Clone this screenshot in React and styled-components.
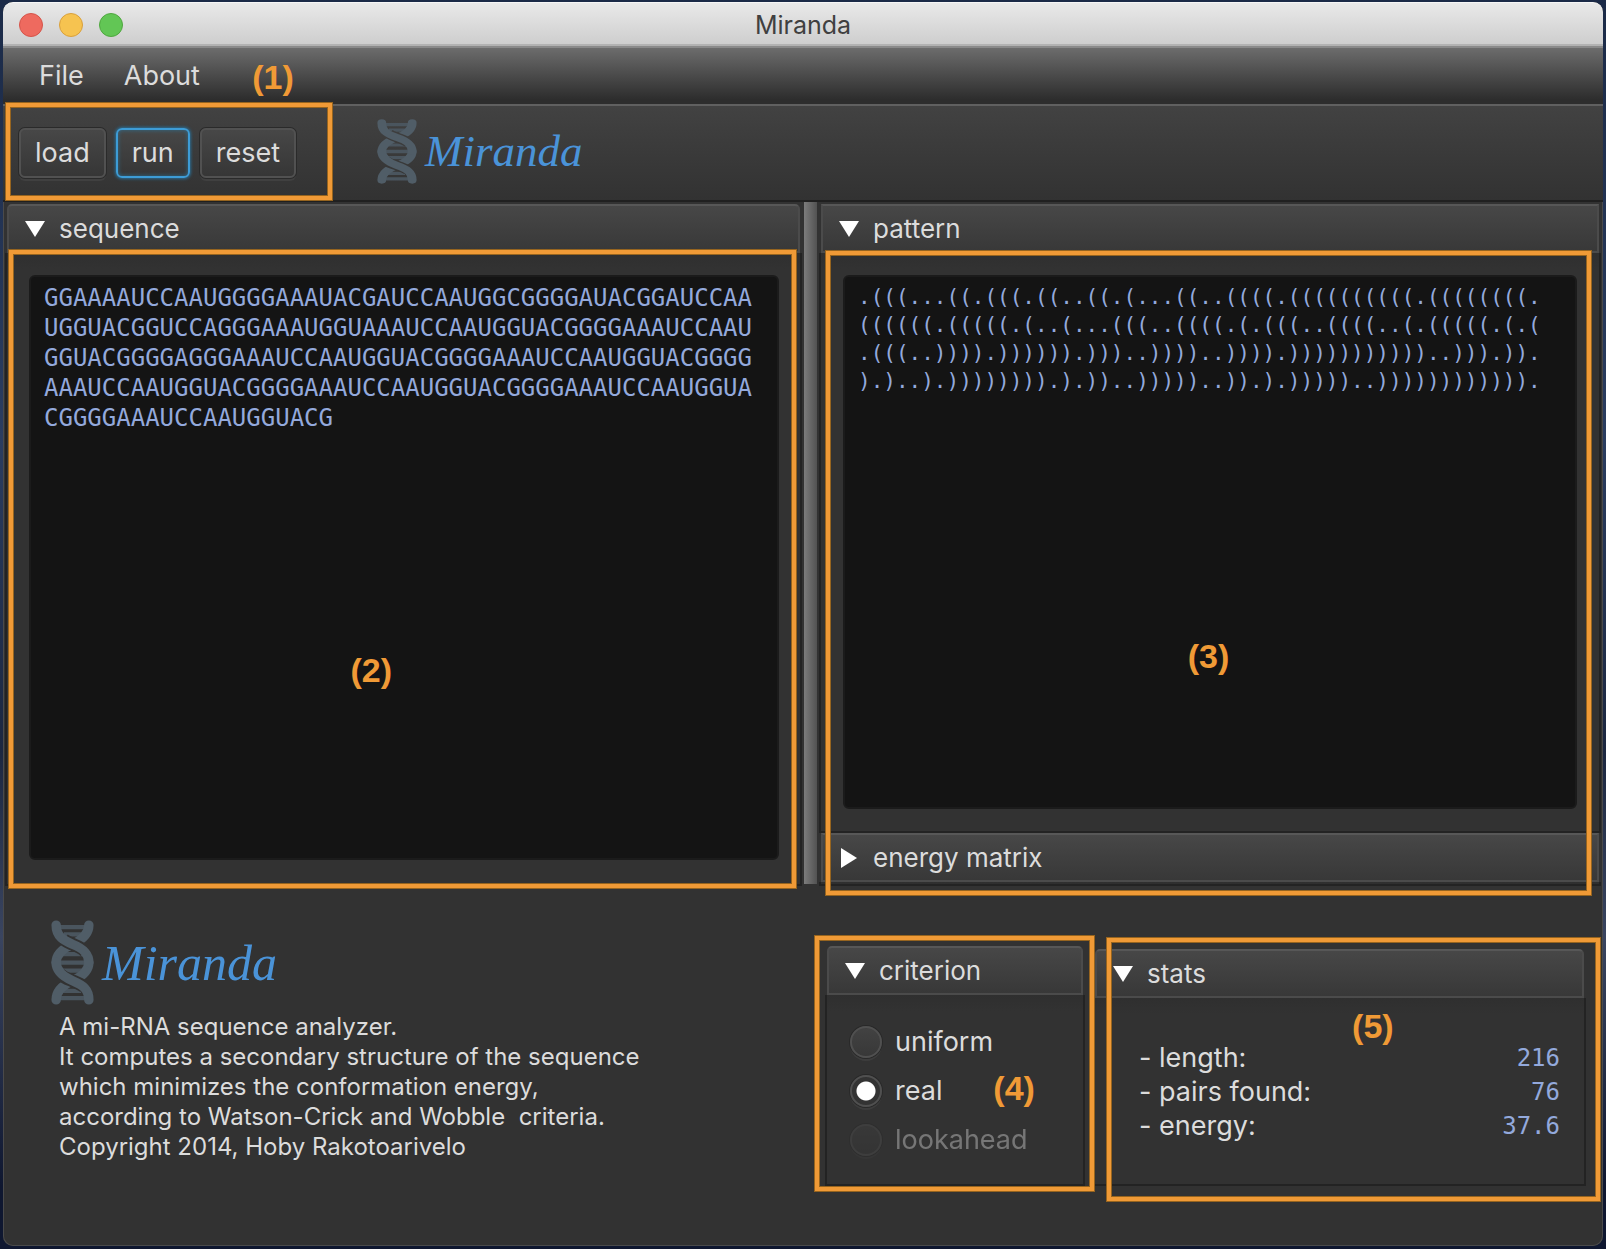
import React, { useId, useState } from "react";
import styled, { createGlobalStyle, css } from "styled-components";

const SANS = `Inter, Roboto, "Liberation Sans", sans-serif`;
const MONO = `"DejaVu Sans Mono", "Liberation Mono", monospace`;

const GlobalStyle = createGlobalStyle`
  *, *::before, *::after { box-sizing: border-box; }
  body {
    margin: 0;
    background: linear-gradient(#1b2a47, #2b3d60 35%, #1c2740 60%, #3a4560 75%, #0f1730 95%);
    font-family: ${SANS};
    color: #dcdcdc;
  }
`;

const Desktop = styled.div`
  display: flex;
  min-height: 100vh;
  padding: 2px 3px 3px;
`;

const Window = styled.div`
  flex: 1;
  min-width: 0;
  display: flex;
  flex-direction: column;
  background: #323232;
  border-radius: 10px;
  box-shadow: inset 0 0 0 1px #4a4a4a;
`;

const TitleBar = styled.header`
  display: grid;
  grid-template-columns: 1fr auto 1fr;
  align-items: center;
  height: 44px;
  padding: 2px 16px 0;
  background: linear-gradient(#e9e9e9, #cecece);
  border-top: 1px solid #f6f6f6;
  border-bottom: 2px solid #b2b2b2;
  border-radius: 10px 10px 0 0;
`;

const Title = styled.h1`
  margin: 0;
  font-size: 25px;
  font-weight: 400;
  line-height: 30px;
  color: #404040;
`;

const Lights = styled.div`
  display: flex;
  gap: 16px;
`;

const Light = styled.button`
  width: 24px;
  height: 24px;
  padding: 0;
  border: 1px solid ${(p) => p.$edge};
  border-radius: 50%;
  background: ${(p) => p.$fill};
`;

const MenuBar = styled.nav`
  display: flex;
  align-items: center;
  gap: 40px;
  height: 58px;
  padding: 0 36px;
  background: linear-gradient(#6c6c6c, #2d2d2d 92%);
  border-top: 2px solid #8a8a8a;
`;

const MenuItem = styled.button`
  padding: 0;
  border: 0;
  background: none;
  color: #dcdcdc;
  font: 400 27px/30px ${SANS};
`;

const ToolBar = styled.div`
  display: flex;
  align-items: center;
  gap: 44px;
  height: 98px;
  background: linear-gradient(#424242, #323232);
  border-top: 2px solid #606060;
  border-bottom: 2px solid #202020;
`;

const Actions = styled.div`
  position: relative;
  display: flex;
  align-items: center;
  align-self: stretch;
  gap: 10px;
  width: 330px;
  padding-left: 16px;
`;

const ActionButton = styled.button`
  height: 50px;
  padding: 0 14px;
  border: 2px solid #515151;
  border-radius: 6px;
  background: linear-gradient(#474747, #363636);
  box-shadow: 0 0 0 1px #2a2a2a, 0 3px 0 #404040;
  color: #dcdcdc;
  font: 400 27px/30px ${SANS};
  ${(p) =>
    p.$focused &&
    css`
      border-color: #3d9cd6;
      box-shadow: 0 0 3px 1px #2a6d93, inset 0 0 4px #2f6f90;
    `}
`;

const Brand = styled.div`
  display: flex;
  align-items: center;
  gap: 8px;
  padding-bottom: 4px;
`;

const BrandName = styled.span`
  font-family: "Liberation Serif", serif;
  font-style: italic;
  font-size: ${(p) => p.$size}px;
  line-height: 56px;
  color: #4a93d8;
`;

const Split = styled.main`
  flex: 1;
  display: grid;
  grid-template-columns: 801fr 13px 786fr;
`;

const SplitSide = styled.section`
  position: relative;
  display: flex;
  flex-direction: column;
  min-width: 0;
  padding: 2px 2px 0;
`;

const Divider = styled.div`
  margin-bottom: 2px;
  background: linear-gradient(90deg, #7c7c7c, #525252);
`;

const Pane = styled.section`
  display: flex;
  flex-direction: column;
  flex: ${(p) => (p.$open ? 1 : "none")};
`;

const PaneHeader = styled.button`
  display: flex;
  align-items: center;
  gap: 14px;
  height: 49px;
  margin: 0 2px;
  padding: 0 16px;
  border: 2px solid #4b4b4b;
  border-top-color: #575757;
  border-radius: ${(p) => (p.$square ? "0" : "5px 5px 0 0")};
  background: linear-gradient(#474747, #383838);
  color: #dcdcdc;
  font: 400 26px/30px ${SANS};
  text-align: left;
`;

const ArrowBox = styled.span`
  display: flex;
  justify-content: center;
  width: 20px;
`;

const PaneBody = styled.div`
  flex: 1;
  display: flex;
  flex-direction: column;
  padding: ${(p) => p.$padding};
  border: 2px solid #232323;
  border-top: 0;
  background: linear-gradient(#2f2f2f, #323232 16px);
`;

const Sequence = styled.textarea`
  flex: 1;
  width: 100%;
  padding: 6px 13px;
  border: 2px solid #1b1b1b;
  border-radius: 6px;
  background: #141414;
  color: #93a9dc;
  font-family: ${MONO};
  font-size: ${(p) => p.$size}px;
  line-height: ${(p) => p.$line}px;
  white-space: pre;
  overflow: hidden;
  resize: none;
  outline: 0;
`;

const Footer = styled.footer`
  display: grid;
  grid-template-columns: 822fr 260fr 501fr;
  min-height: 359px;
  padding-right: 17px;
`;

const About = styled.section`
  padding: 34px 0 0 48px;
`;

const Blurb = styled.p`
  margin: 3px 0 0 8px;
  font-size: 24px;
  line-height: 30px;
  white-space: pre-wrap;
`;

const FooterCell = styled.div`
  position: relative;
  display: flex;
  flex-direction: column;
  margin: ${(p) => p.$margin};
`;

const Choices = styled.fieldset`
  display: flex;
  flex-direction: column;
  gap: 17px;
  margin: 0;
  padding: 0;
  border: 0;
`;

const Choice = styled.label`
  display: flex;
  align-items: center;
  gap: 13px;
  font-size: 27px;
  line-height: 32px;
  opacity: ${(p) => (p.$muted ? 0.4 : 1)};
`;

const Radio = styled.input`
  appearance: none;
  width: 32px;
  height: 32px;
  margin: 0;
  border: 2px solid #505050;
  border-radius: 50%;
  background: linear-gradient(#424242, #383838);
  box-shadow: 0 0 0 1px #292929, 0 3px 0 #3d3d3d;
  &:checked {
    background: radial-gradient(circle, #ffffff 9px, #333333 10px);
  }
`;

const Stats = styled.table`
  width: 100%;
  border-collapse: collapse;
  line-height: 34px;
  th {
    padding: 0;
    font-weight: 400;
    font-size: 27px;
    text-align: left;
  }
  td {
    padding: 0;
    font-family: ${MONO};
    font-size: 24px;
    text-align: right;
    color: #93a9dc;
  }
`;

const Outline = styled.div`
  position: absolute;
  inset: ${(p) => p.$inset};
  z-index: 2;
  border: 4px solid #f09a36;
  box-shadow: 0 0 0 1px #96641f, inset 0 0 0 1px #96641f;
  pointer-events: none;
`;

const Callout = styled.span`
  position: absolute;
  left: ${(p) => p.$x};
  top: ${(p) => p.$y};
  transform: translate(-50%, -50%);
  font: 700 34px/36px "Liberation Sans", Arial, sans-serif;
  color: #f09a36;
`;

function Marker({ inset, x, y, children }) {
  return (
    <Outline $inset={inset}>
      <Callout $x={x} $y={y}>{children}</Callout>
    </Outline>
  );
}

function Arrow({ open }) {
  return (
    <ArrowBox>
      {open ? (
        <svg width="20" height="16" viewBox="0 0 20 16"><path d="M0 0H20L10 16Z" fill="#fff" /></svg>
      ) : (
        <svg width="16" height="20" viewBox="0 0 16 20"><path d="M0 0V20L16 10Z" fill="#fff" /></svg>
      )}
    </ArrowBox>
  );
}

const FRONT_TOP = "M12 12C12 40 30 48 50 57C75 67 88 79 88 100";
const FRONT_BOTTOM = "M12 100C12 122 30 134 50 143C75 154 88 163 88 188";

function Helix({ width, height }) {
  const id = useId();
  return (
    <svg width={width} height={height} viewBox="0 0 100 200" preserveAspectRatio="none" fill="none" strokeLinecap="round" aria-hidden="true">
      <mask id={id} maskUnits="userSpaceOnUse" x="0" y="0" width="100" height="200">
        <rect width="100" height="200" fill="#fff" />
        <path d="M30 46C38 52 44 54 50 57C62 62 74 68 80 75M20 127C30 136 40 139 50 143C62 148 72 153 78 158" stroke="#000" strokeWidth="30" strokeLinecap="butt" />
      </mask>
      <g mask={`url(#${id})`}>
        <path
          d="M12 17H88M30 34H80M58 47H76M24 66H46M16 80H76M10 100H90M26 119H86M54 133H76M24 152H42M18 167H70M12 184H88"
          stroke="#4a555e"
          strokeWidth="10"
          strokeLinecap="butt"
        />
        <path d="M88 12C88 35 70 48 50 57C30 66 12 78 12 100M88 100C88 120 70 134 50 143C30 152 12 165 12 188" stroke="#505d67" strokeWidth="22" />
      </g>
      <path d={FRONT_TOP} stroke="#505d67" strokeWidth="22" />
      <path d={FRONT_BOTTOM} stroke="#505d67" strokeWidth="22" />
    </svg>
  );
}

const SEQUENCE = [
  "GGAAAAUCCAAUGGGGAAAUACGAUCCAAUGGCGGGGAUACGGAUCCAA",
  "UGGUACGGUCCAGGGAAAUGGUAAAUCCAAUGGUACGGGGAAAUCCAAU",
  "GGUACGGGGAGGGAAAUCCAAUGGUACGGGGAAAUCCAAUGGUACGGGG",
  "AAAUCCAAUGGUACGGGGAAAUCCAAUGGUACGGGGAAAUCCAAUGGUA",
  "CGGGGAAAUCCAAUGGUACG",
].join("\n");

const PATTERN = [
  ".(((...((.(((.((..((.(...((..((((.((((((((((.((((((((.",
  "((((((.(((((.(..(...(((..((((.(.(((..((((..(.(((((.(.(",
  ".(((..)))).)))))).)))..))))..)))).)))))))))))..))).)).",
  ").)..).)))))))).).))..)))))..)).).)))))..)))))))))))).",
].join("\n");

const BLURB = `A mi-RNA sequence analyzer.
It computes a secondary structure of the sequence
which minimizes the conformation energy,
according to Watson-Crick and Wobble  criteria.
Copyright 2014, Hoby Rakotoarivelo`;

const CRITERIA = [
  { name: "uniform" },
  { name: "real" },
  { name: "lookahead", disabled: true },
];

const STATS = [
  ["- length:", "216"],
  ["- pairs found:", "76"],
  ["- energy:", "37.6"],
];

export default function App() {
  const [criterion, setCriterion] = useState("real");
  return (
    <Desktop>
      <GlobalStyle />
      <Window>
        <TitleBar>
          <Lights>
            <Light aria-label="Close" $fill="#ee6a5f" $edge="#d5544a" />
            <Light aria-label="Minimize" $fill="#f6c350" $edge="#d9a03c" />
            <Light aria-label="Zoom" $fill="#62c655" $edge="#4fa73f" />
          </Lights>
          <Title>Miranda</Title>
        </TitleBar>
        <MenuBar>
          <MenuItem>File</MenuItem>
          <MenuItem>About</MenuItem>
        </MenuBar>
        <ToolBar>
          <Actions>
            <ActionButton>load</ActionButton>
            <ActionButton $focused>run</ActionButton>
            <ActionButton>reset</ActionButton>
            <Marker inset="-3px 1px 0 3px" x="263px" y="-30px">(1)</Marker>
          </Actions>
          <Brand>
            <Helix width={40} height={65} />
            <BrandName $size={45}>Miranda</BrandName>
          </Brand>
        </ToolBar>
        <Split>
          <SplitSide>
            <Pane $open>
              <PaneHeader aria-expanded="true"><Arrow open />sequence</PaneHeader>
              <PaneBody $padding="22px 21px 24px 22px">
                <Sequence aria-label="sequence" defaultValue={SEQUENCE} spellCheck={false} $size={24} $line={30} />
              </PaneBody>
            </Pane>
            <Marker inset="48px 8px -2px 6px" x="46%" y="66%">(2)</Marker>
          </SplitSide>
          <Divider />
          <SplitSide>
            <Pane $open>
              <PaneHeader $square aria-expanded="true"><Arrow open />pattern</PaneHeader>
              <PaneBody $padding="22px 22px 22px">
                <Sequence aria-label="pattern" defaultValue={PATTERN} spellCheck={false} $size={21} $line={28} />
              </PaneBody>
            </Pane>
            <Pane>
              <PaneHeader $square aria-expanded="false"><Arrow />energy matrix</PaneHeader>
              <PaneBody $padding="2px 0 0" />
            </Pane>
            <Marker inset="49px 12px -9px 9px" x="50%" y="63%">(3)</Marker>
          </SplitSide>
        </Split>
        <Footer>
          <About>
            <Brand>
              <Helix width={43} height={85} />
              <BrandName $size={50}>Miranda</BrandName>
            </Brand>
            <Blurb>{BLURB}</Blurb>
          </About>
          <FooterCell $margin="60px 0 60px">
            <Pane $open>
              <PaneHeader aria-expanded="true"><Arrow open />criterion</PaneHeader>
              <PaneBody $padding="31px 23px 28px">
                <Choices aria-label="criterion">
                  {CRITERIA.map(({ name, disabled }) => (
                    <Choice key={name} $muted={disabled}>
                      <Radio
                        type="radio"
                        name="criterion"
                        value={name}
                        disabled={disabled}
                        checked={criterion === name}
                        onChange={() => setCriterion(name)}
                      />
                      {name}
                    </Choice>
                  ))}
                </Choices>
              </PaneBody>
            </Pane>
            <Marker inset="-10px -9px -5px -10px" x="72%" y="60%">(4)</Marker>
          </FooterCell>
          <FooterCell $margin="63px 0 60px 8px">
            <Pane $open>
              <PaneHeader aria-expanded="true"><Arrow open />stats</PaneHeader>
              <PaneBody $padding="43px 24px 0 44px">
                <Stats>
                  <tbody>
                    {STATS.map(([label, value]) => (
                      <tr key={label}>
                        <th scope="row">{label}</th>
                        <td>{value}</td>
                      </tr>
                    ))}
                  </tbody>
                </Stats>
              </PaneBody>
            </Pane>
            <Marker inset="-11px -14px -15px 14px" x="54%" y="33%">(5)</Marker>
          </FooterCell>
        </Footer>
      </Window>
    </Desktop>
  );
}
